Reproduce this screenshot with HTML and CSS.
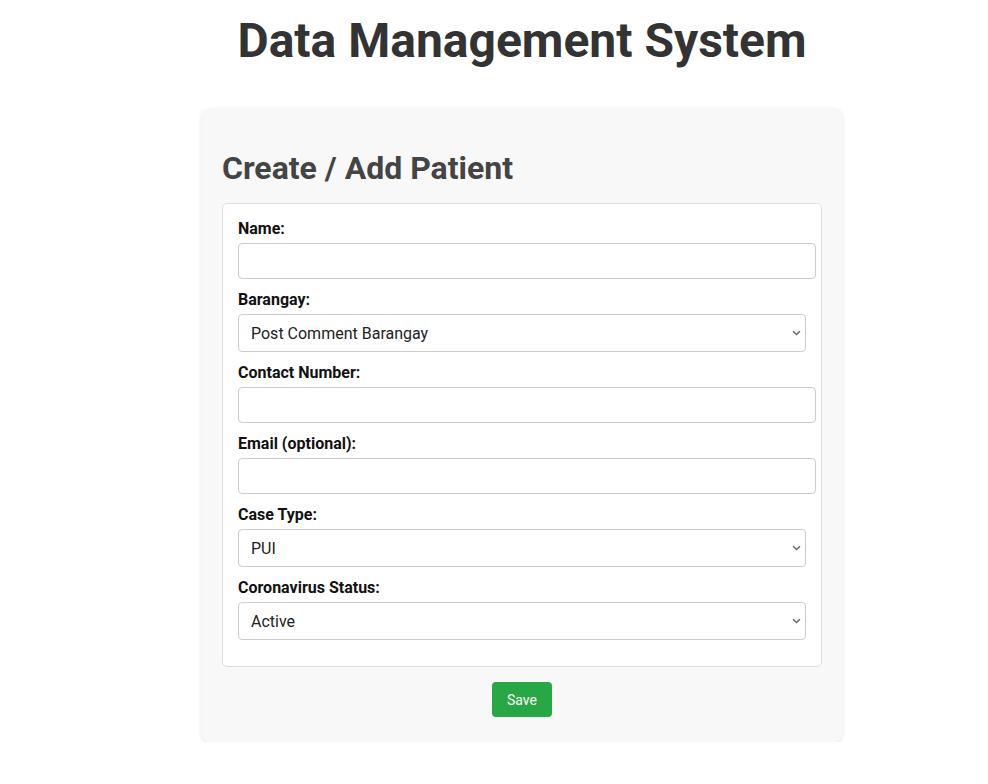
FILE: index.html
```html
<!DOCTYPE html>
<html lang="en">
<head>
<meta charset="utf-8">
<title>Data Management System</title>
<link rel="stylesheet" href="styles.css">
</head>
<body>
<div class="page">
  <h1 class="title">Data Management System</h1>
  <div class="card">
    <h2 class="card-title">Create / Add Patient</h2>
    <form class="form-box">
      <label class="label" for="name">Name:</label>
      <input class="input" id="name" type="text">
      <label class="label" for="barangay">Barangay:</label>
      <select class="select" id="barangay"><option>Post Comment Barangay</option></select>
      <label class="label" for="contact">Contact Number:</label>
      <input class="input" id="contact" type="text">
      <label class="label" for="email">Email (optional):</label>
      <input class="input" id="email" type="text">
      <label class="label" for="case">Case Type:</label>
      <select class="select" id="case"><option>PUI</option></select>
      <label class="label" for="status">Coronavirus Status:</label>
      <select class="select" id="status"><option>Active</option></select>
    </form>
    <div class="actions"><button class="btn-save" type="button">Save</button></div>
  </div>
</div>
</body>
</html>
```
FILE: styles.css
```css
html, body {
  margin: 0;
  padding: 0;
  background: #fff;
}
body {
  font-family: Roboto, "Liberation Sans", Arial, sans-serif;
}
.page {
  padding-left: 56px;
  display: flex;
  flex-direction: column;
  align-items: center;
}
.title {
  margin: 13px 0 0;
  font-size: 48px;
  line-height: 56px;
  font-weight: 700;
  color: #333;
  text-align: center;
}
.card {
  box-sizing: border-box;
  width: 640px;
  margin-top: 39px;
  padding: 20px 20px 25px;
  background: #f8f8f8;
  border-radius: 8px;
  box-shadow: 0 2px 5px rgba(0, 0, 0, 0.1);
}
.card-title {
  margin: 22px 0 16px;
  font-size: 32px;
  line-height: 37px;
  font-weight: 700;
  color: #444;
}
.form-box {
  display: flex;
  flex-direction: column;
  align-items: flex-start;
  padding: 15px;
  background: #fff;
  border: 1px solid #ddd;
  border-radius: 5px;
}
.label {
  display: block;
  font-size: 16px;
  line-height: 19px;
  font-weight: 700;
  color: #111;
  margin-bottom: 5px;
}
.input {
  box-sizing: border-box;
  width: calc(100% + 10px);
  height: 36px;
  margin: 0 0 11px;
  padding: 8px;
  border: 1px solid #ccc;
  border-radius: 4px;
  font-family: inherit;
  font-size: 16px;
  background: #fff;
}
.select {
  box-sizing: border-box;
  width: 100%;
  height: 38px;
  margin: 0 0 11px;
  padding: 8px 24px 8px 12px;
  border: 1px solid #ccc;
  border-radius: 4px;
  font-family: inherit;
  font-size: 16px;
  color: #222;
  -webkit-appearance: none;
  appearance: none;
  background-color: #fff;
  background-image: url("data:image/svg+xml,%3Csvg xmlns='http://www.w3.org/2000/svg' width='9' height='6' viewBox='0 0 9 6'%3E%3Cpath d='M1 1.2l3.5 3.4 3.5-3.4' fill='none' stroke='%23666' stroke-width='1.4'/%3E%3C/svg%3E");
  background-repeat: no-repeat;
  background-position: right 4px center;
  background-size: 9px 6px;
}
.actions {
  display: flex;
  justify-content: center;
  margin-top: 15px;
}
.btn-save {
  width: 60px;
  height: 35px;
  padding: 0;
  border: none;
  border-radius: 4px;
  background: #28a745;
  color: #fff;
  font-family: inherit;
  font-size: 14px;
  cursor: pointer;
}
```
